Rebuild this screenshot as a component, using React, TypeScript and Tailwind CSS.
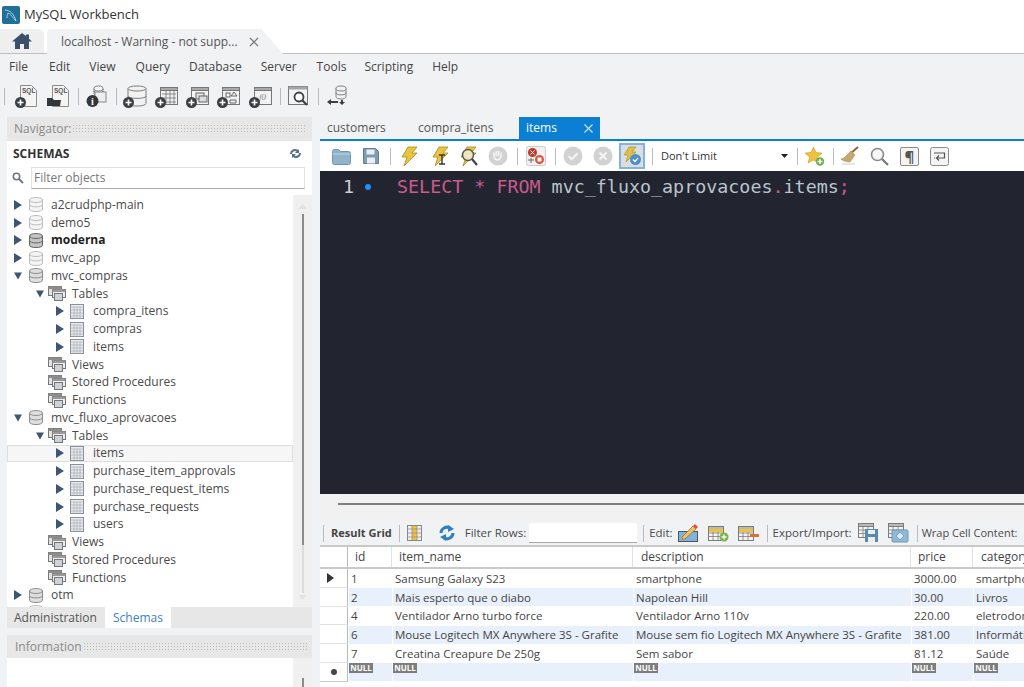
import type { ReactNode } from "react";

const PlusBadge = ({ x = 0, y = 11 }: { x?: number; y?: number }) => (
  <g>
    <circle cx={x + 5.5} cy={y + 5.5} r="5.5" fill="#3c3f42" />
    <path d={`M${x + 2.5} ${y + 5.5}h6M${x + 5.5} ${y + 2.5}v6`} stroke="#fff" strokeWidth="1.6" />
  </g>
);

const Ico = ({ w = 23, h = 23, className = "", children }: { w?: number; h?: number; className?: string; children: ReactNode }) => (
  <svg width={w} height={h} viewBox={`0 0 ${w} ${h}`} className={`shrink-0 ${className}`}>
    {children}
  </svg>
);

const SqlDoc = ({ folder = false }: { folder?: boolean }) => (
  <Ico>
    <path d="M5.5 .5h11l5 5v16h-16z" fill="#f4f4f4" stroke="#8d8d8d" />
    <text x="7" y="8" fontSize="6.5" fontWeight="700" fontFamily="Liberation Sans" fill="#555">SQL</text>
    {folder ? <path d="M0 21v-8h5l2 2h7l-1 6z" fill="#34373a" /> : <PlusBadge y={12} />}
  </Ico>
);

const DbShape = ({ x, y, w, h, fill = "#f2f2f2", stroke = "#7f7f7f" }: { x: number; y: number; w: number; h: number; fill?: string; stroke?: string }) => (
  <g fill={fill} stroke={stroke}>
    <path d={`M${x} ${y + 2.5}v${h - 5}c0 3.4 ${w} 3.4 ${w} 0v-${h - 5}`} />
    <ellipse cx={x + w / 2} cy={y + 2.5} rx={w / 2} ry="2.5" />
    <path d={`M${x} ${y + h / 2}c0 3.2 ${w} 3.2 ${w} 0`} fill="none" />
  </g>
);

const GridShape = ({ x, y, w, h }: { x: number; y: number; w: number; h: number }) => (
  <g stroke="#7c7c7c" fill="#f3f3f3">
    <rect x={x + 0.5} y={y + 0.5} width={w} height={h} />
    <rect x={x + 0.5} y={y + 0.5} width={w} height="3" fill="#b9b9b9" />
    <path d={`M${x + w / 3} ${y + 3}v${h - 3}M${x + (2 * w) / 3} ${y + 3}v${h - 3}M${x} ${y + h / 2}h${w}M${x} ${y + (3 * h) / 4}h${w}`} fill="none" strokeWidth=".8" />
  </g>
);

const Frame = ({ children }: { children?: ReactNode }) => (
  <>
    <rect x="5.5" y="2.5" width="17" height="17" fill="#f3f3f3" stroke="#777" />
    <rect x="5.5" y="2.5" width="17" height="3" fill="#a9a9a9" stroke="#777" />
    {children}
    <PlusBadge y={12} />
  </>
);

const Sep = ({ className = "" }: { className?: string }) => <div className={`w-px h-[17px] bg-[#b8bcc0] shrink-0 ${className}`} />;

const Bolt = ({ children }: { children?: ReactNode }) => (
  <Ico w={21} h={21}>
    <path d="M9 1h9l-5 6h5L5 20l3-9H3z" fill="#e9c53f" stroke="#a98a25" strokeWidth=".8" />
    {children}
  </Ico>
);

const Arrow = ({ open }: { open?: boolean }) => (
  <svg width="8" height="10" viewBox="0 0 8 10" className="shrink-0">
    {open ? <path d="M0 1.5h8L4 8.5z" fill="#3f5670" /> : <path d="M0 0l8 5-8 5z" fill="#3f5670" />}
  </svg>
);

const DbIcon = ({ tone }: { tone: "light" | "mid" | "dark" }) => {
  const fill = tone === "light" ? "#f4f4f4" : tone === "mid" ? "#dedede" : "#c4c4c4";
  const stroke = tone === "light" ? "#bcbcbc" : tone === "mid" ? "#8e8e8e" : "#666";
  return (
    <Ico w={14} h={15}>
      <DbShape x={0.5} y={0.5} w={13} h={14} fill={fill} stroke={stroke} />
    </Ico>
  );
};

const TableIcon = () => (
  <svg width="14" height="15" viewBox="0 0 14 15" className="shrink-0">
    <rect x=".5" y=".5" width="13" height="14" fill="#e9ebef" stroke="#8b8f96" />
    <path d="M.5 3h13M.5 6h13M.5 9h13M.5 12h13M4 3v12M7 3v12M10 3v12" stroke="#a6aab1" strokeWidth=".7" />
  </svg>
);

const GroupIcon = () => (
  <svg width="18" height="15" viewBox="0 0 18 15" className="shrink-0">
    <rect x=".5" y=".5" width="13" height="9" fill="#e2e2e2" stroke="#777" />
    <rect x=".5" y=".5" width="13" height="2.5" fill="#8d8d8d" />
    <rect x="4.5" y="3.5" width="13" height="8" fill="#eeeeee" stroke="#777" />
    <rect x="4.5" y="3.5" width="13" height="2.5" fill="#9a9a9a" />
    <rect x="6.5" y="7.5" width="8" height="7" fill="#cdd3d8" stroke="#777" />
  </svg>
);

type TreeRow = { label: string; level: 0 | 1 | 2; open?: boolean; noArrow?: boolean; tone?: "light" | "mid" | "dark"; bold?: boolean; selected?: boolean };

const tree: TreeRow[] = [
  { label: "a2crudphp-main", level: 0, tone: "light" },
  { label: "demo5", level: 0, tone: "light" },
  { label: "moderna", level: 0, tone: "dark", bold: true },
  { label: "mvc_app", level: 0, tone: "light" },
  { label: "mvc_compras", level: 0, tone: "mid", open: true },
  { label: "Tables", level: 1, open: true },
  { label: "compra_itens", level: 2 },
  { label: "compras", level: 2 },
  { label: "items", level: 2 },
  { label: "Views", level: 1, noArrow: true },
  { label: "Stored Procedures", level: 1, noArrow: true },
  { label: "Functions", level: 1, noArrow: true },
  { label: "mvc_fluxo_aprovacoes", level: 0, tone: "mid", open: true },
  { label: "Tables", level: 1, open: true },
  { label: "items", level: 2, selected: true },
  { label: "purchase_item_approvals", level: 2 },
  { label: "purchase_request_items", level: 2 },
  { label: "purchase_requests", level: 2 },
  { label: "users", level: 2 },
  { label: "Views", level: 1, noArrow: true },
  { label: "Stored Procedures", level: 1, noArrow: true },
  { label: "Functions", level: 1, noArrow: true },
  { label: "otm", level: 0, tone: "mid" },
];

const Row = ({ r }: { r: TreeRow }) => (
  <div
    className={`h-[17.76px] flex items-center shrink-0 ${r.selected ? "bg-[#f6f6f6] outline outline-[#dedede] -outline-offset-1" : ""} ${
      r.level === 0 ? "pl-[7px]" : r.level === 1 ? "pl-[29px]" : "pl-[49px]"
    }`}
  >
    <div className="w-[8px] shrink-0">{!r.noArrow && <Arrow open={r.open} />}</div>
    {r.level === 0 && (
      <>
        <div className="ml-[7px]">
          <DbIcon tone={r.tone ?? "light"} />
        </div>
        <span className={`ml-[8px] ${r.bold ? "font-bold text-[#222]" : ""}`}>{r.label}</span>
      </>
    )}
    {r.level === 1 && (
      <>
        <div className="ml-[4px]">
          <GroupIcon />
        </div>
        <span className="ml-[6px]">{r.label}</span>
      </>
    )}
    {r.level === 2 && (
      <>
        <div className="ml-[6px]">
          <TableIcon />
        </div>
        <span className="ml-[9px]">{r.label}</span>
      </>
    )}
  </div>
);

const Dots = () => (
  <div className="flex-1 h-[10px] ml-[1px] bg-[radial-gradient(#bdbdbd_0.7px,transparent_0.8px)] bg-[length:3px_3px]" />
);

const GRID = "grid grid-cols-[28px_44px_241px_278px_62px_1fr]";

const results = [
  ["1", "Samsung Galaxy S23", "smartphone", "3000.00", "smartphone"],
  ["2", "Mais esperto que o diabo", "Napolean Hill", "30.00", "Livros"],
  ["4", "Ventilador Arno turbo force", "Ventilador Arno 110v", "220.00", "eletrodomésticos"],
  ["6", "Mouse Logitech MX Anywhere 3S - Grafite", "Mouse sem fio Logitech MX Anywhere 3S - Grafite", "381.00", "Informática"],
  ["7", "Creatina Creapure De 250g", "Sem sabor", "81.12", "Saúde"],
];

const Null = () => <div className="w-[24px] h-[10px] bg-[#7d7d7d] text-white text-[8px] leading-[10px] font-bold text-center">NULL</div>;

export default function App() {
  return (
    <div className="w-[1024px] h-[687px] overflow-hidden bg-[#f1f2f4] text-[12px] text-[#4a4a4a] flex flex-col font-['Open_Sans','Noto_Sans',sans-serif]">
      {/* title bar */}
      <div className="h-[29px] bg-white flex items-center pl-[2px] shrink-0">
        <svg width="18" height="18" viewBox="0 0 18 18">
          <rect width="18" height="18" rx="2" fill="#1f6f96" />
          <path d="M3 4c5 0 9 4 11 11-3-3-5-7-8-8-1 2-1 3-1 5" fill="none" stroke="#a9d2e4" strokeWidth="1" />
        </svg>
        <span className="ml-[4px] text-[13px] text-[#333]">MySQL Workbench</span>
      </div>

      {/* connection tabs */}
      <div className="h-[25px] bg-white border-b border-[#bfbfbf] flex items-end shrink-0">
        <div className="w-[44px] h-[24px] bg-[#efefef] rounded-tr-[6px] flex items-center justify-center">
          <svg width="20" height="16" viewBox="0 0 20 16">
            <path d="M10 0L0 8.5h3V16h5v-5h4v5h5V8.5h3l-3-2.7V1.500h-3v1.600z" fill="#3a5169" />
          </svg>
        </div>
        <div className="ml-[3px] w-[236px] h-[25px] -mb-px bg-[#f1f2f4] flex items-center pl-[14px] [clip-path:polygon(0_0,91%_0,100%_100%,0_100%)] rounded-tl-[4px]">
          <span className="text-[#555]">localhost - Warning - not supp...</span>
          <svg width="10" height="10" viewBox="0 0 10 10" className="ml-[11px]">
            <path d="M1 1l8 8M9 1l-8 8" stroke="#777" strokeWidth="1.2" />
          </svg>
        </div>
      </div>

      {/* menu */}
      <div className="h-[26px] flex items-center pl-[9px] shrink-0 text-[#444]">
        <span>File</span>
        <span className="ml-[21px]">Edit</span>
        <span className="ml-[19px]">View</span>
        <span className="ml-[20px]">Query</span>
        <span className="ml-[19px]">Database</span>
        <span className="ml-[19px]">Server</span>
        <span className="ml-[20px]">Tools</span>
        <span className="ml-[18px]">Scripting</span>
        <span className="ml-[19px]">Help</span>
      </div>

      {/* main toolbar */}
      <div className="h-[32px] flex items-center pl-[4px] shrink-0">
        <Sep />
        <div className="ml-[10px]"><SqlDoc /></div>
        <div className="ml-[9px]"><SqlDoc folder /></div>
        <Sep className="ml-[8px]" />
        <Ico w={21} className="ml-[7px]">
          <DbShape x={8} y={1} w={9} h={10} />
          <rect x="9" y="7" width="11" height="10" fill="#eee" stroke="#888" />
          <circle cx="6.500" cy="16" r="6" fill="#34373a" />
          <text x="5" y="20" fontSize="10" fontWeight="700" fontFamily="Liberation Serif" fill="#fff">i</text>
        </Ico>
        <Sep className="ml-[9px]" />
        <Ico w={24} className="ml-[6px]">
          <DbShape x={5} y={1} w={18} h={20} />
          <PlusBadge y={12} />
        </Ico>
        <Ico className="ml-[8px]">
          <Frame><path d="M7 9h14M7 13h14M7 17h14M11 6v13M15 6v13M19 6v13" stroke="#888" /></Frame>
        </Ico>
        <Ico className="ml-[8px]">
          <Frame><rect x="10" y="8" width="8" height="6" fill="#e7e7e7" stroke="#666" /><rect x="13" y="11" width="8" height="6" fill="#ddd" stroke="#666" /></Frame>
        </Ico>
        <Ico className="ml-[8px]">
          <Frame><rect x="9" y="8" width="4" height="4" fill="none" stroke="#666" /><path d="M17 7l3 4h-6zM13 15h6v3h-6z" fill="none" stroke="#666" /></Frame>
        </Ico>
        <Ico className="ml-[9px]">
          <Frame><text x="10" y="15" fontSize="9" fontFamily="Liberation Serif" fontStyle="italic" fill="#888">f0</text></Frame>
        </Ico>
        <Sep className="ml-[8px]" />
        <Ico w={21} className="ml-[7px]">
          <rect x=".5" y="1.500" width="19" height="18" fill="#f3f3f3" stroke="#777" />
          <rect x=".5" y="1.500" width="19" height="3" fill="#a5a5a5" />
          <circle cx="11" cy="12" r="4.500" fill="#fff" stroke="#3c3f42" strokeWidth="1.8" />
          <path d="M14 15l5 5" stroke="#3c3f42" strokeWidth="2.2" />
        </Ico>
        <Sep className="ml-[9px]" />
        <Ico w={22} className="ml-[7px]">
          <DbShape x={10} y={1} w={10} h={13} />
          <path d="M1 17l4-3v2h7v2H5v2zM16 20l-3-3h2v-2h2v2h2z" fill="#3c3f42" />
        </Ico>
      </div>

      {/* panes */}
      <div className="flex-1 min-h-0 flex pt-[5px]">
        {/* left */}
        <div className="w-[305px] ml-[7px] flex flex-col shrink-0">
          <div className="h-[24px] bg-[#e7e7e7] flex items-center pl-[7px] text-[#8a8a8a] shrink-0">
            Navigator:
            <Dots />
            <div className="w-[5px]" />
          </div>
          <div className="bg-white flex-1 min-h-0 flex flex-col">
            <div className="h-[26px] flex items-center justify-between pl-[6px] pr-[10px] shrink-0 pb-[1px]">
              <span className="font-bold text-[#333]">SCHEMAS</span>
              <svg width="13" height="11" viewBox="0 0 13 11">
                <path d="M1 6a5 5 0 0 1 8-4l1-1v4H6l1.500-1.500A3 3 0 0 0 3 6zM12 5a5 5 0 0 1-8 4l-1 1V6h4L5.500 7.500A3 3 0 0 0 10 5z" fill="#557089" />
              </svg>
            </div>
            <div className="flex items-center pl-[5px] pr-[7px] shrink-0">
              <svg width="12" height="12" viewBox="0 0 12 12" className="shrink-0">
                <circle cx="4.500" cy="4.500" r="3.200" fill="none" stroke="#6f7780" strokeWidth="1.600" />
                <path d="M7 7l4 4" stroke="#6f7780" strokeWidth="2" />
              </svg>
              <div className="ml-[7px] flex-1 h-[22px] border border-[#e2e2e2] border-b-[#a9a9a9] flex items-center pl-[2px] text-[#777]">Filter objects</div>
            </div>
            <div className="flex-1 min-h-0 flex mt-[6px]">
              <div className="flex-1 min-w-0 flex flex-col overflow-hidden pt-[1px]">
                {tree.map((r, i) => (
                  <Row key={i} r={r} />
                ))}
                <div className="pl-[22px] pt-[1px] shrink-0">
                  <DbIcon tone="light" />
                </div>
              </div>
              <div className="w-[19px] bg-[#f0f0f0] shrink-0 flex flex-col items-center pt-[9px]">
                <svg width="9" height="5" viewBox="0 0 9 5"><path d="M0 5l4.500-5 4.500 5z" fill="#e3e3e3" /></svg>
                <div className="w-[2px] h-[331px] bg-[#8b8b8b] mt-[5px]" />
                <div className="w-[2px] h-[48px] bg-[#dcdcdc]" />
                <svg width="9" height="5" viewBox="0 0 9 5" className="mt-[2px]"><path d="M0 0l4.500 5 4.500-5z" fill="#e3e3e3" /></svg>
              </div>
            </div>
          </div>
          <div className="h-[21px] bg-[#e7e7e7] flex shrink-0">
            <div className="pl-[7px] pr-[8px] flex items-center text-[#555]">Administration</div>
            <div className="w-[66px] bg-white flex items-center justify-center text-[#3b82c4]">Schemas</div>
          </div>
          <div className="h-[7px] bg-[#f1f2f4] shrink-0" />
          <div className="h-[23px] bg-[#e7e7e7] flex items-center pl-[8px] text-[#8a8a8a] shrink-0">
            Information
            <Dots />
            <div className="w-[5px]" />
          </div>
          <div className="h-[29px] bg-white flex justify-end shrink-0">
            <div className="w-[19px] bg-[#f0f0f0] flex justify-center pt-[20px]">
              <div className="w-[2px] h-[9px] bg-[#8b8b8b]" />
            </div>
          </div>
        </div>

        {/* right */}
        <div className="flex-1 min-w-0 ml-[8px] flex flex-col">
          <div className="h-[24px] flex items-end border-b-2 border-[#0a7fd4] shrink-0 text-[#555] pl-px">
            <div className="w-[89px] h-[22px] flex items-center pl-[6px]">customers</div>
            <div className="w-[109px] h-[22px] flex items-center pl-[8px]">compra_itens</div>
            <div className="w-[81px] h-[22px] bg-[#0a7fd4] text-white flex items-center pl-[7px]">
              items
              <svg width="9" height="9" viewBox="0 0 9 9" className="ml-[27px]">
                <path d="M.5.5l8 8M8.500.5l-8 8" stroke="#cfe6f7" strokeWidth="1.100" />
              </svg>
            </div>
          </div>

          {/* editor toolbar */}
          <div className="h-[30px] bg-white flex items-center pl-[12px] shrink-0">
            <Ico w={19} h={17}>
              <path d="M.5 3.500a2 2 0 0 1 2-2h4l2 2h8a2 2 0 0 1 2 2v9a2 2 0 0 1-2 2h-14a2 2 0 0 1-2-2z" fill="#8fb3cb" stroke="#6f97b2" />
              <path d="M.5 6h18" stroke="#bcd4e3" />
            </Ico>
            <Ico w={16} h={16} className="ml-[12px]">
              <path d="M.5.5h12l3 3v12H.5z" fill="#7f9cb2" stroke="#5d7d95" />
              <rect x="3.500" y="1.500" width="8" height="5" fill="#e9eef2" />
              <rect x="4" y="9.500" width="8" height="6" fill="#e9eef2" />
            </Ico>
            <Sep className="ml-[11px]" />
            <div className="ml-[8px]"><Bolt /></div>
            <div className="ml-[10px]">
              <Bolt>
                <path d="M9 9h6M12 9v9M9 18h6" stroke="#333" strokeWidth="1.400" />
              </Bolt>
            </div>
            <div className="ml-[7px]">
              <Bolt>
                <circle cx="10" cy="9" r="5.500" fill="#f3f3f3" fillOpacity=".7" stroke="#555" strokeWidth="1.400" />
                <path d="M14 13l5 6" stroke="#444" strokeWidth="2.200" />
              </Bolt>
            </div>
            <Ico w={20} h={20} className="ml-[9px]">
              <circle cx="10" cy="10" r="9.500" fill="#d2d2d2" />
              <path d="M6 10V6.500M8.300 10V5M10.600 10V5M13 10V6.500M6 9c0 6 7 7 7 0" fill="none" stroke="#f3f3f3" strokeWidth="1.700" />
            </Ico>
            <Sep className="ml-[9px]" />
            <Ico w={20} h={20} className="ml-[8px]">
              <rect x=".5" y=".5" width="19" height="19" rx="2" fill="#f1f1f1" stroke="#ccc" />
              <circle cx="6.500" cy="6.500" r="4.500" fill="#c0392b" />
              <path d="M4.500 4.500l4 4M8.500 4.500l-4 4" stroke="#fff" />
              <circle cx="13.500" cy="13.500" r="4.500" fill="#d9553f" />
              <rect x="11.500" y="11.500" width="4" height="4" fill="#fff" />
              <path d="M2 14h6M5 12v5" stroke="#666" />
            </Ico>
            <Sep className="ml-[9px]" />
            <Ico w={20} h={20} className="ml-[7px]">
              <circle cx="10" cy="10" r="9.500" fill="#d2d2d2" />
              <path d="M5.500 10l3.200 3.200 6-6" fill="none" stroke="#f3f3f3" strokeWidth="2.200" />
            </Ico>
            <Ico w={20} h={20} className="ml-[10px]">
              <circle cx="10" cy="10" r="9.500" fill="#d2d2d2" />
              <path d="M6.500 6.500l7 7M13.500 6.500l-7 7" stroke="#f3f3f3" strokeWidth="2.200" />
            </Ico>
            <div className="ml-[6px] w-[26px] h-[26px] border-2 border-[#7db4e0] bg-[#ddd] flex items-center justify-center shrink-0">
              <Ico w={20} h={20}>
                <path d="M7 1h7l-4 5h4L4 16l2-7H2z" fill="#dcc04a" stroke="#a98a25" strokeWidth=".6" />
                <circle cx="13.500" cy="13.500" r="5.500" fill="#4d8fc9" />
                <path d="M11 13.500l2 2 3-3.500" fill="none" stroke="#fff" strokeWidth="1.400" />
              </Ico>
            </div>
            <Sep className="ml-[7px]" />
            <div className="ml-[4px] w-[134px] h-[24px] bg-white flex items-center justify-between pl-[4px] pr-[3px] text-[#333] text-[11px] shrink-0">
              <span>Don't Limit</span>
              <svg width="7" height="4" viewBox="0 0 7 4"><path d="M0 0h7L3.500 4z" fill="#222" /></svg>
            </div>
            <Sep className="ml-[6px]" />
            <Ico w={20} h={20} className="ml-[7px]">
              <path d="M8.500 1l2.500 5.500 6 .6-4.500 4 1.300 5.900-5.300-3-5.300 3 1.300-5.900-4.500-4 6-.6z" fill="#f0c13c" stroke="#c99a2a" strokeWidth=".6" />
              <circle cx="15" cy="15.500" r="4.200" fill="#6fae4d" />
              <path d="M12.500 15.500h5M15 13v5" stroke="#fff" strokeWidth="1.400" />
            </Ico>
            <Sep className="ml-[8px]" />
            <Ico w={20} h={20} className="ml-[6px]">
              <path d="M18 1L10 8" stroke="#8c6a3c" strokeWidth="2" />
              <path d="M11 5l4 4-5 7c-3 0-7-1-9-3 3 0 6-4 10-8z" fill="#c9a870" stroke="#a98850" strokeWidth=".6" />
              <path d="M2 18h13" stroke="#ddd" strokeWidth="1.500" />
            </Ico>
            <Ico w={19} h={19} className="ml-[10px]">
              <circle cx="7.500" cy="7.500" r="6" fill="#f6f6f6" stroke="#8a8a8a" strokeWidth="1.600" />
              <path d="M12 12l6 6" stroke="#777" strokeWidth="2.200" />
            </Ico>
            <div className="ml-[11px] w-[19px] h-[19px] border border-[#8a8a8a] rounded-[2px] bg-[#f4f4f4] flex items-center justify-center text-[15px] leading-none text-[#555] font-bold shrink-0">¶</div>
            <Ico w={19} h={19} className="ml-[11px]">
              <rect x=".5" y=".5" width="18" height="18" rx="2" fill="#f4f4f4" stroke="#8a8a8a" />
              <path d="M4 6h10.500v5H7M9 8.500L6.500 11 9 13.500M4 11h1" fill="none" stroke="#555" strokeWidth="1.200" />
            </Ico>
          </div>

          {/* editor */}
          <div className="h-[323px] bg-[#22252f] flex items-start shrink-0 pt-[4px] font-['DejaVu_Sans_Mono',monospace] text-[18.35px] leading-[24px]">
            <span className="w-[34px] text-right text-[#c8cfd4]">1</span>
            <div className="w-[6px] h-[6px] mt-[9px] ml-[11px] rounded-full bg-[#1e90ff]" />
            <div className="ml-[26px] whitespace-pre text-[#b9c4cc]">
              <span className="text-[#c85b8d]">SELECT * FROM</span> mvc_fluxo_aprovacoes<span className="text-[#c85b8d]">.</span>items<span className="text-[#c85b8d]">;</span>
            </div>
          </div>

          {/* splitter */}
          <div className="h-[27px] bg-[#f1f1f1] pl-[18px] pt-[9px] shrink-0">
            <div className="h-[2px] bg-[#808080]" />
          </div>

          {/* result toolbar */}
          <div className="h-[24px] flex items-center pl-[3px] shrink-0 text-[11.500px] whitespace-nowrap overflow-hidden">
            <Sep />
            <span className="ml-[7px] font-bold text-[#444] text-[11px]">Result Grid</span>
            <Sep className="ml-[7px]" />
            <Ico w={15} h={16} className="ml-[7px]">
              <rect x=".5" y=".5" width="14" height="15" fill="#eee" stroke="#888" />
              <rect x="5" y="1" width="5" height="14" fill="#f0c23c" />
              <path d="M.5 4h14M.5 8h14M.5 12h14M5 1v14M10 1v14" stroke="#8a8a8a" strokeWidth=".7" />
            </Ico>
            <Ico w={18} h={16} className="ml-[16px]">
              <path d="M3 8a6 6 0 0 1 9-5" fill="none" stroke="#2f7fc4" strokeWidth="3" />
              <path d="M10 0l6 4-6 3z" fill="#2f7fc4" />
              <path d="M15 8a6 6 0 0 1-9 5" fill="none" stroke="#2f7fc4" strokeWidth="3" />
              <path d="M8 16l-6-4 6-3z" fill="#2f7fc4" />
            </Ico>
            <span className="ml-[9px]">Filter Rows:</span>
            <div className="ml-[3px] w-[108px] h-[20px] bg-white border-b border-[#aaa] shrink-0" />
            <Sep className="ml-[6px]" />
            <span className="ml-[5px]">Edit:</span>
            <Ico w={21} h={20} className="ml-[5px]">
              <rect x=".5" y="8.500" width="19" height="10" fill="#7fb2dc" stroke="#555" />
              <path d="M4 14L15 3l3 3L7 16H4z" fill="#f0c060" stroke="#8a6a30" strokeWidth=".7" />
              <path d="M15 3l2-2 3 3-2 2z" fill="#d9553f" />
            </Ico>
            <Ico w={21} h={17} className="ml-[9px]">
              <GridShape x={0} y={1} w={15} h={14} />
              <rect x="1" y="4" width="14" height="3" fill="#f0c23c" />
              <circle cx="16" cy="12" r="4.500" fill="#7ab648" />
              <path d="M13.500 12h5M16 9.500v5" stroke="#fff" strokeWidth="1.300" />
            </Ico>
            <Ico w={21} h={17} className="ml-[9px]">
              <GridShape x={0} y={1} w={15} h={14} />
              <rect x="1" y="4" width="14" height="3" fill="#f0c23c" />
              <rect x="12" y="9" width="9" height="3" fill="#d9703f" />
            </Ico>
            <Sep className="ml-[8px]" />
            <span className="ml-[5px]">Export/Import:</span>
            <Ico w={21} h={20} className="ml-[6px]">
              <GridShape x={0} y={0} w={15} h={14} />
              <path d="M7 6h13v13H7z" fill="#5a8ab0" />
              <rect x="10" y="7" width="7" height="4" fill="#e9eef2" />
              <rect x="10" y="14" width="7" height="5" fill="#e9eef2" />
            </Ico>
            <Ico w={21} h={20} className="ml-[9px]">
              <GridShape x={0} y={0} w={15} h={14} />
              <rect x="4" y="7" width="16" height="12" rx="1" fill="#8fb9d6" stroke="#6f97b2" />
              <path d="M12 9l4 4-4 4-4-4z" fill="#dbe9f2" stroke="#5a8ab0" strokeWidth=".7" />
            </Ico>
            <Sep className="ml-[8px]" />
            <span className="ml-[4px] text-[11px]">Wrap Cell Content:</span>
          </div>

          {/* result grid */}
          <div className="border-t-2 border-[#c9c9c9] bg-white flex-1 min-h-0 overflow-hidden text-[11.500px] text-[#444] whitespace-nowrap">
            <div className={`${GRID} h-[22px] border-b-2 border-[#c9c9c9]`}>
              <div className="border-r border-[#bbb]" />
              <div className="pl-[7px] flex items-center text-[12px] border-r border-[#e2e2e2]">id</div>
              <div className="pl-[7px] flex items-center text-[12px] border-r border-[#e2e2e2]">item_name</div>
              <div className="pl-[8px] flex items-center text-[12px] border-r border-[#e2e2e2]">description</div>
              <div className="pl-[7px] flex items-center text-[12px] border-r border-[#e2e2e2]">price</div>
              <div className="pl-[8px] flex items-center text-[12px]">category</div>
            </div>
            {results.map((r, i) => (
              <div key={r[0]} className={`${GRID} h-[18.75px]`}>
                <div className="border-r border-[#bbb] border-b border-b-[#e2e2e2] flex items-center pl-[7px]">
                  {i === 0 && <svg width="7" height="10" viewBox="0 0 7 10"><path d="M0 0l7 5-7 5z" fill="#333" /></svg>}
                </div>
                {r.map((c, j) => (
                  <div key={j} className={`flex items-center overflow-hidden ml-px pl-[2px] my-[0.5px] ${i % 2 === 1 ? "bg-[#e8f0fb]" : ""}`}>
                    {c}
                  </div>
                ))}
              </div>
            ))}
            <div className={`${GRID} h-[18.75px]`}>
              <div className="border-r border-[#bbb] border-b border-b-[#c9c9c9] flex items-center justify-center">
                <div className="w-[6px] h-[6px] rounded-full bg-[#444]" />
              </div>
              {[0, 1, 2, 3, 4].map((j) => (
                <div key={j} className="ml-px bg-[#e8f0fb] my-[0.5px]">
                  <Null />
                </div>
              ))}
            </div>
          </div>
        </div>
      </div>
    </div>
  );
}
